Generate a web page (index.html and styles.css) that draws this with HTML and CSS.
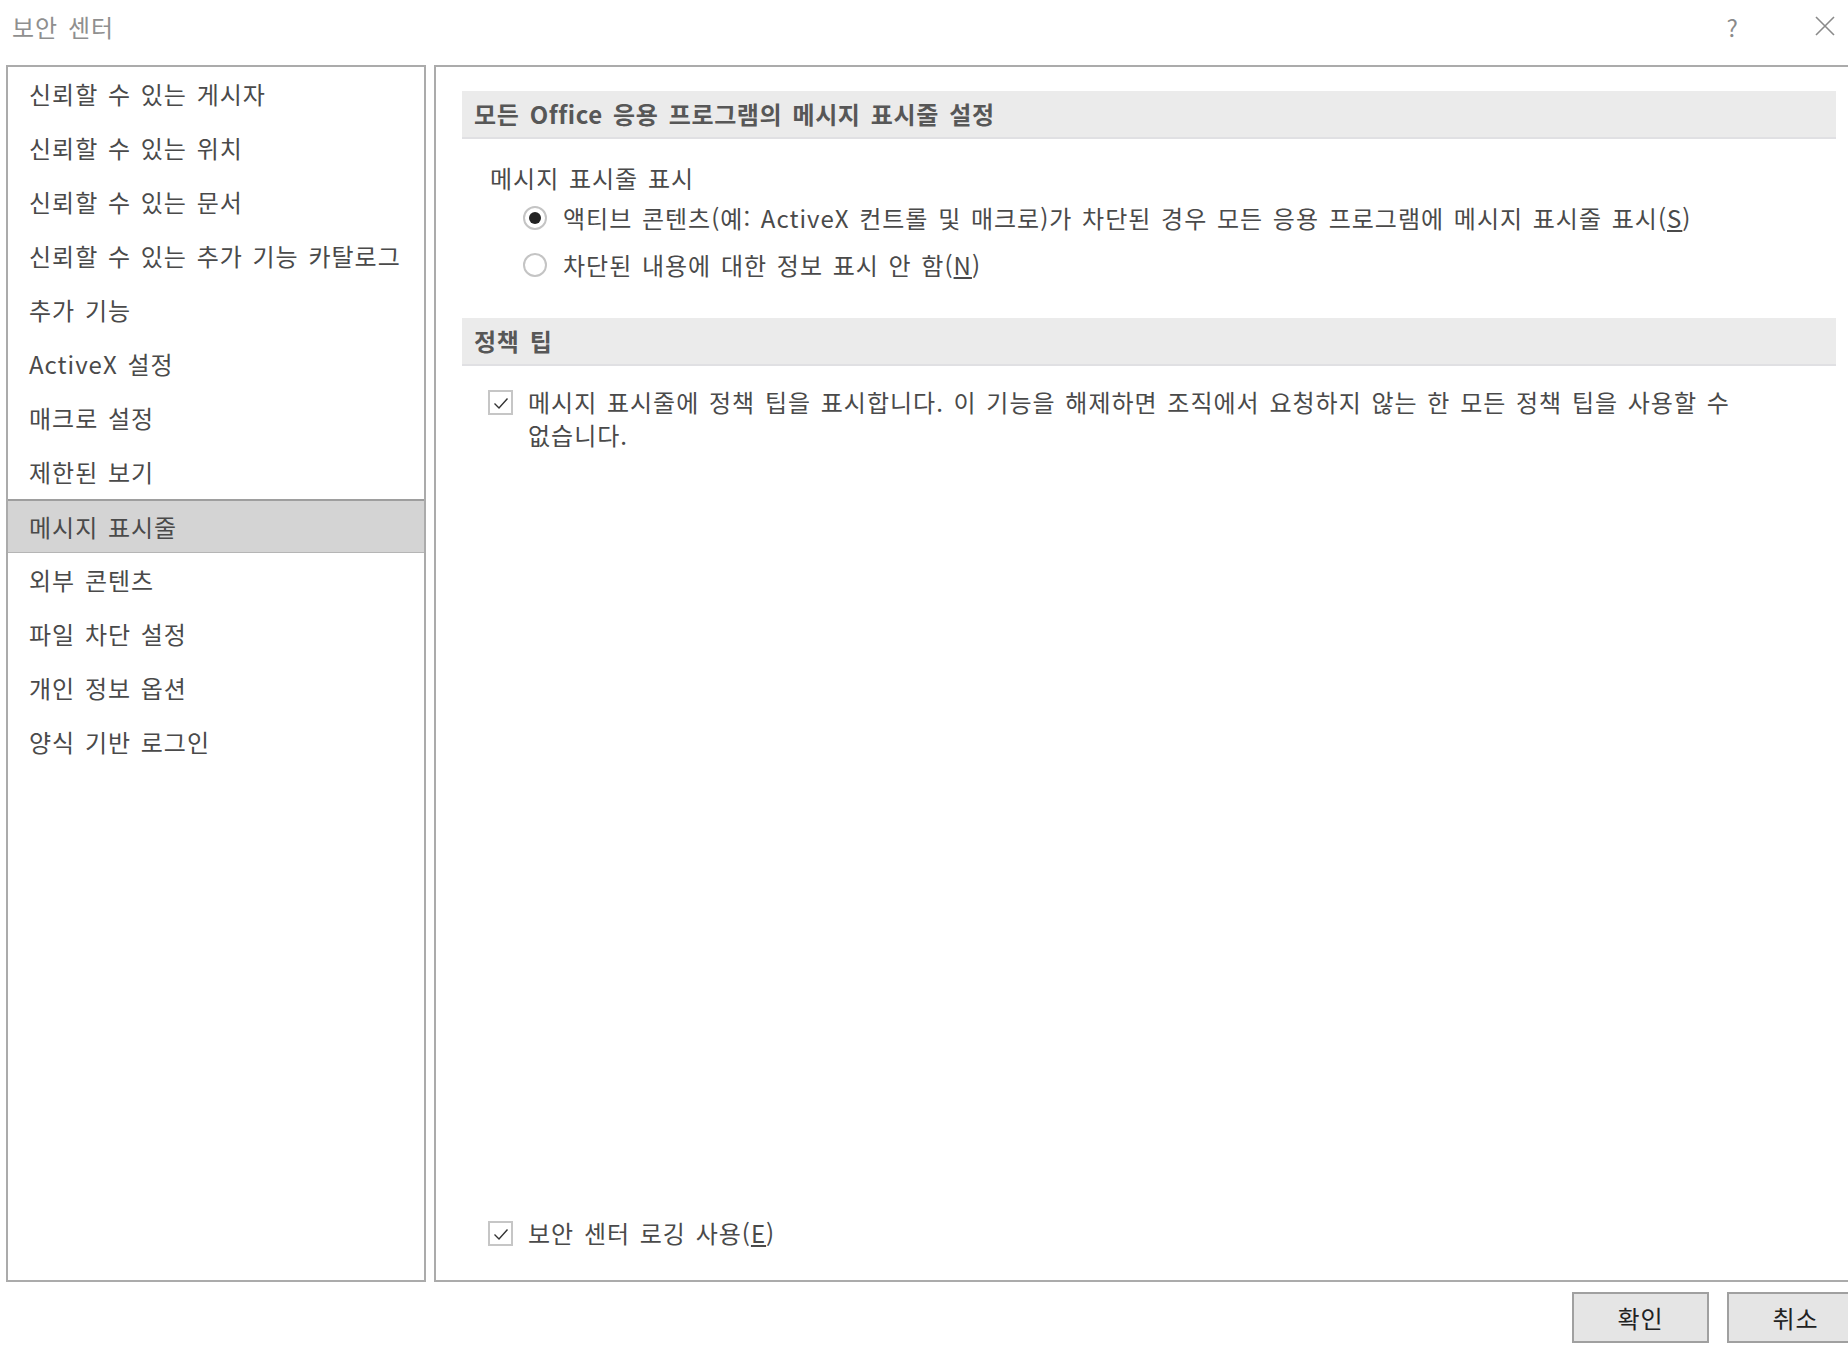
FILE: index.html
```html
<!DOCTYPE html>
<html lang="ko">
<head>
	<meta charset="UTF-8">
	<title>보안 센터</title>
	<link rel="stylesheet" href="styles.css">
</head>
<body>
	<div class="dialog">
		<div class="titlebar">
			<span class="title">보안 센터</span>
			<a href="javascript:;" class="helpBtn">?</a>
			<a href="javascript:;" class="closeBtn">
				<svg width="20" height="20" viewBox="0 0 20 20"><path d="M1 1 L19 19 M19 1 L1 19" stroke="#8a8a8a" stroke-width="1.6" fill="none"/></svg>
			</a>
		</div>

		<div class="main">
			<!-- 왼쪽 메뉴 -->
			<ul class="nav">
				<li>신뢰할 수 있는 게시자</li>
				<li>신뢰할 수 있는 위치</li>
				<li>신뢰할 수 있는 문서</li>
				<li>신뢰할 수 있는 추가 기능 카탈로그</li>
				<li>추가 기능</li>
				<li>ActiveX 설정</li>
				<li>매크로 설정</li>
				<li>제한된 보기</li>
				<li class="cur">메시지 표시줄</li>
				<li>외부 콘텐츠</li>
				<li>파일 차단 설정</li>
				<li>개인 정보 옵션</li>
				<li>양식 기반 로그인</li>
			</ul>

			<!-- 오른쪽 내용 -->
			<div class="content">
				<h2 class="sectionHead">모든 Office 응용 프로그램의 메시지 표시줄 설정</h2>
				<p class="groupLabel">메시지 표시줄 표시</p>
				<label class="radioRow">
					<span class="radio checked"></span>
					<span>액티브 콘텐츠(예: ActiveX 컨트롤 및 매크로)가 차단된 경우 모든 응용 프로그램에 메시지 표시줄 표시(<u>S</u>)</span>
				</label>
				<label class="radioRow">
					<span class="radio"></span>
					<span>차단된 내용에 대한 정보 표시 안 함(<u>N</u>)</span>
				</label>

				<h2 class="sectionHead second">정책 팁</h2>
				<label class="checkRow">
					<span class="check"><svg width="20" height="20" viewBox="0 0 20 20"><path d="M3.5 10.5 L8 15 L16.5 5.5" stroke="#333" stroke-width="1.4" fill="none"/></svg></span>
					<span class="checkText">메시지 표시줄에 정책 팁을 표시합니다. 이 기능을 해제하면 조직에서 요청하지 않는 한 모든 정책 팁을 사용할 수 없습니다.</span>
				</label>

				<label class="checkRow bottom">
					<span class="check"><svg width="20" height="20" viewBox="0 0 20 20"><path d="M3.5 10.5 L8 15 L16.5 5.5" stroke="#333" stroke-width="1.4" fill="none"/></svg></span>
					<span class="checkText">보안 센터 로깅 사용(<u>E</u>)</span>
				</label>
			</div>
		</div>

		<div class="footer">
			<a href="javascript:;" class="btn">확인</a>
			<a href="javascript:;" class="btn">취소</a>
		</div>
	</div>
</body>
</html>
```

FILE: styles.css
```css
*{
	margin: 0;
	padding: 0;
	box-sizing: border-box;
}
html, body{
	overflow: hidden;
	background-color: #fff;
}
body{
	font-family: "Noto Sans CJK KR", "Noto Sans", sans-serif;
	font-size: 24px;
	letter-spacing: 1px;
	word-spacing: 2px;
	word-break: keep-all;
	color: #4a4a4a;
}
a{
	text-decoration: none;
	color: inherit;
}
.dialog{
	width: 1864px;
}
.titlebar{
	height: 52px;
	display: flex;
	align-items: center;
	padding-left: 12px;
}
.titlebar .title{
	color: #8f8f8f;
	flex: 1;
}
.titlebar .helpBtn{
	color: #8a8a8a;
	font-size: 24px;
	margin-right: 76px;
}
.titlebar .closeBtn{
	display: flex;
	margin-right: 29px;
}
.main{
	display: flex;
	gap: 8px;
	margin-top: 13px;
	padding-left: 6px;
	height: 1217px;
}
.nav{
	list-style: none;
	width: 420px;
	flex-shrink: 0;
	border: 2px solid #ababab;
}
.nav li{
	height: 54px;
	line-height: 54px;
	padding-left: 21px;
	white-space: nowrap;
	cursor: pointer;
}
.nav li.cur{
	background-color: #d4d4d4;
	border-top: 2px solid #9e9e9e;
	border-bottom: 1px solid #b5b5b5;
	line-height: 51px;
}
.content{
	width: 1430px;
	flex-shrink: 0;
	border: 2px solid #ababab;
	padding: 24px 26px 31px 26px;
	display: flex;
	flex-direction: column;
}
.sectionHead{
	height: 48px;
	line-height: 46px;
	padding-left: 12px;
	font-size: 24px;
	font-weight: bold;
	letter-spacing: 0.6px;
	word-spacing: 3px;
	color: #575757;
	background-color: #ebebeb;
	border-bottom: 2px solid #e0e0e3;
}
.sectionHead.second{
	margin-top: 30px;
}
.groupLabel{
	margin-top: 22px;
	padding-left: 28px;
	line-height: 33px;
}
.radioRow{
	display: flex;
	align-items: center;
	height: 47px;
	padding-left: 61px;
}
.radio{
	width: 24px;
	height: 24px;
	border: 2px solid #c4c4c4;
	border-radius: 50%;
	margin-right: 16px;
	display: flex;
	align-items: center;
	justify-content: center;
	flex-shrink: 0;
}
.radio.checked::after{
	content: "";
	width: 12px;
	height: 12px;
	border-radius: 50%;
	background-color: #222;
}
.checkRow{
	display: flex;
	align-items: flex-start;
	margin-top: 19px;
	padding-left: 26px;
	line-height: 33px;
}
.checkRow.bottom{
	margin-top: auto;
}
.check{
	width: 25px;
	height: 25px;
	border: 2px solid #c6c6c6;
	margin-top: 5px;
	margin-right: 15px;
	display: flex;
	align-items: center;
	justify-content: center;
	flex-shrink: 0;
}
.checkText{
	max-width: 1280px;
}
.footer{
	display: flex;
	justify-content: flex-end;
	gap: 18px;
	margin-top: 10px;
}
.btn{
	width: 137px;
	height: 51px;
	border: 2px solid #a0a0a0;
	background-color: #e5e5e5;
	color: #222;
	display: flex;
	align-items: center;
	justify-content: center;
}
```
